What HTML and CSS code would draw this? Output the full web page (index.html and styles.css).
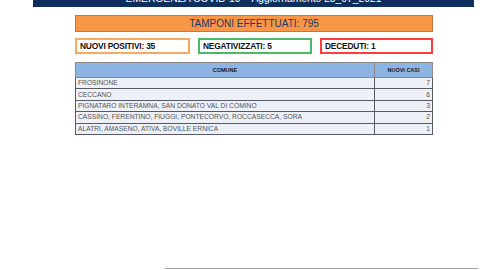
FILE: index.html
```html
<!DOCTYPE html>
<html lang="it">
<head>
<meta charset="utf-8">
<title>Emergenza COVID-19</title>
<link rel="stylesheet" href="styles.css">
</head>
<body>
<div class="page">
  <header class="banner"><span class="banner-text">EMERGENZA COVID-19 – Aggiornamento 23_07_2021</span></header>
  <main class="content">
    <div class="total">TAMPONI EFFETTUATI: 795</div>
    <div class="stats">
      <div class="stat stat-pos">NUOVI POSITIVI: 35</div>
      <div class="stat stat-neg">NEGATIVIZZATI: 5</div>
      <div class="stat stat-dec">DECEDUTI: 1</div>
    </div>
    <table class="cases">
      <thead>
        <tr><th class="col-name">COMUNE</th><th class="col-num">NUOVI CASI</th></tr>
      </thead>
      <tbody>
        <tr><td>FROSINONE</td><td class="num">7</td></tr>
        <tr><td>CECCANO</td><td class="num">6</td></tr>
        <tr><td>PIGNATARO INTERAMNA, SAN DONATO VAL DI COMINO</td><td class="num">3</td></tr>
        <tr><td>CASSINO, FERENTINO, FIUGGI, PONTECORVO, ROCCASECCA, SORA</td><td class="num">2</td></tr>
        <tr><td>ALATRI, AMASENO, ATIVA, BOVILLE ERNICA</td><td class="num">1</td></tr>
      </tbody>
    </table>
  </main>
  <div class="footer-line"></div>
</div>
</body>
</html>
```
FILE: styles.css
```css
html, body {
  margin: 0;
  padding: 0;
  background: #ffffff;
}
body {
  font-family: "Liberation Sans", Arial, sans-serif;
  width: 480px;
  height: 270px;
  overflow: hidden;
}
.page {
  display: flex;
  flex-direction: column;
  height: 270px;
}
.banner {
  margin-left: 33px;
  width: 441px;
  height: 7px;
  background: #0e2f5e;
  overflow: hidden;
  display: flex;
  justify-content: center;
  align-items: flex-end;
}
.banner-text {
  color: #ffffff;
  font-size: 10.3px;
  line-height: 11px;
  margin-bottom: 3px;
  white-space: nowrap;
}
.content {
  margin-left: 75px;
  width: 358px;
  display: flex;
  flex-direction: column;
}
.total {
  margin-top: 8px;
  height: 15px;
  background: #f79646;
  border: 1px solid #c8773a;
  color: #1f3864;
  font-size: 10px;
  line-height: 15px;
  text-align: center;
}
.stats {
  margin-top: 6px;
  display: flex;
  gap: 8px;
}
.stat {
  width: 108px;
  height: 12px;
  border: 2px solid;
  font-size: 8.4px;
  font-weight: bold;
  line-height: 12px;
  padding-left: 3px;
  color: #111111;
  letter-spacing: -0.2px;
}
.stat-pos { border-color: #f9a95e; }
.stat-neg { border-color: #4cb86a; width: 107px; }
.stat-dec { border-color: #ff3b3b; width: 106px; }
.cases {
  margin-top: 8px;
  width: 358px;
  border-collapse: collapse;
  border: 1px solid #8a8a8a;
  font-size: 6.7px;
}
.cases th {
  background: #8db4e2;
  height: 14px;
  font-weight: bold;
  color: #1a1a1a;
  font-size: 5.5px;
  text-align: center;
  border: 1px solid #8a8a8a;
  padding: 0;
}
.col-num { width: 57px; }
.cases td {
  background: #eef0f7;
  color: #555555;
  height: 10.4px;
  line-height: 10px;
  padding: 0 2px;
  border: 1px solid #555a66;
  white-space: nowrap;
}
.cases td.num {
  text-align: right;
}
.footer-line {
  margin-top: auto;
  margin-left: 165px;
  width: 313px;
  height: 1px;
  background: #a5a3b0;
  margin-bottom: 1px;
}
```
